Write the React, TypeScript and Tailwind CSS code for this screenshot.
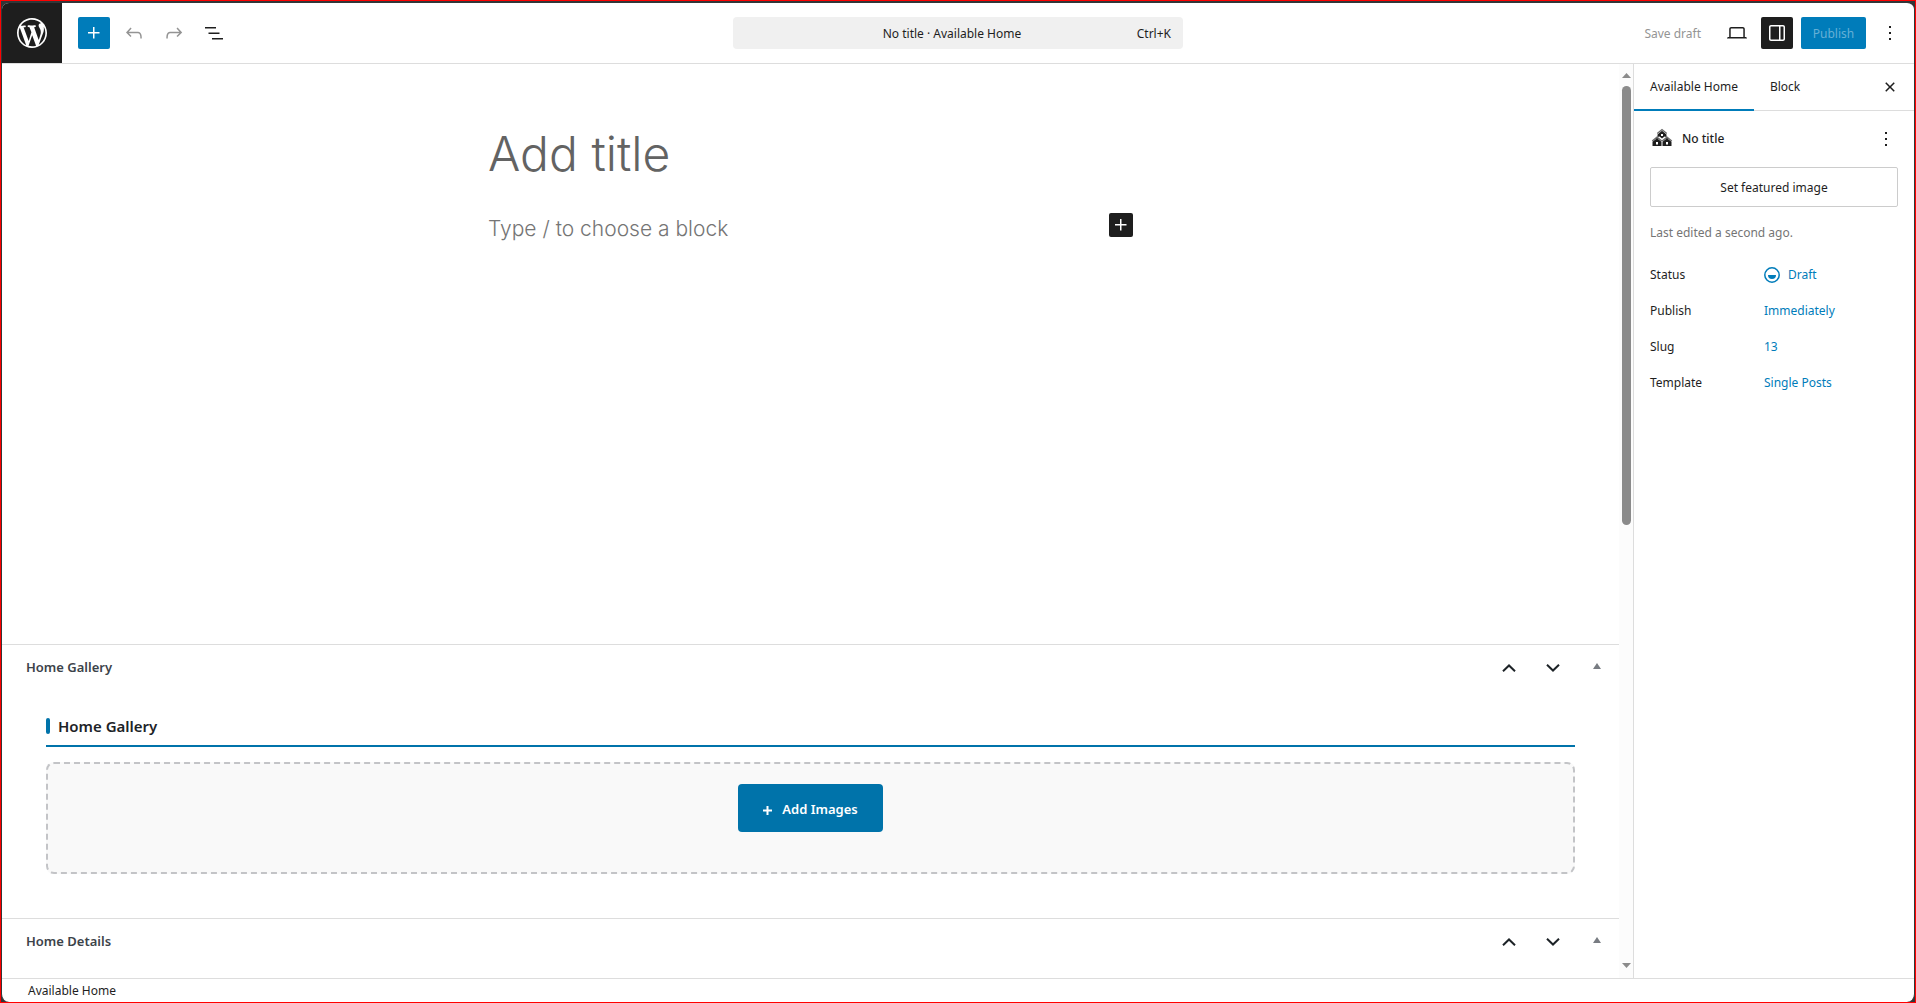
import { useState, type ReactNode } from "react";

const details = [
  { label: "Status", value: "Draft", icon: true },
  { label: "Publish", value: "Immediately" },
  { label: "Slug", value: "13" },
  { label: "Template", value: "Single Posts" },
];

function Icon({ children, className = "h-6 w-6" }: { children: ReactNode; className?: string }) {
  return (
    <svg viewBox="0 0 24 24" className={className} fill="currentColor" aria-hidden="true">
      {children}
    </svg>
  );
}

function IconButton({
  label,
  className = "",
  disabled,
  children,
}: {
  label: string;
  className?: string;
  disabled?: boolean;
  children: ReactNode;
}) {
  return (
    <button
      type="button"
      aria-label={label}
      disabled={disabled}
      className={`flex h-8 w-8 shrink-0 items-center justify-center rounded-xs ${className}`}
    >
      {children}
    </button>
  );
}

const plusPath = <path d="M11 12.5V17.5H12.5V12.5H17.5V11H12.5V6H11V11H6V12.5H11Z" />;
const morePath = <path d="M13 19h-2v-2h2v2zm0-6h-2v-2h2v2zm0-6h-2V5h2v2z" />;

function Toolbar() {
  return (
    <header className="grid h-[61px] shrink-0 grid-cols-[1fr_450px_1fr] items-center border-b border-[#ddd]">
      <div className="flex items-center gap-2 self-stretch">
        <a
          href="#dashboard"
          aria-label="View posts"
          className="mr-2 flex w-[60px] shrink-0 items-center justify-center self-stretch bg-[#1e1e1e] text-white"
        >
          <svg viewBox="-2 -2 24 24" className="h-9 w-9" fill="currentColor" aria-hidden="true">
            <path d="M20 10c0-5.51-4.49-10-10-10C4.48 0 0 4.49 0 10c0 5.52 4.48 10 10 10 5.51 0 10-4.48 10-10zM7.78 15.37L4.37 6.22c.55-.02 1.17-.08 1.17-.08.5-.06.44-1.13-.06-1.11 0 0-1.45.11-2.37.11-.18 0-.37 0-.58-.01C4.12 2.69 6.87 1.11 10 1.11c2.33 0 4.45.87 6.05 2.34-.68-.11-1.65.39-1.65 1.58 0 .74.45 1.36.9 2.1.35.61.55 1.36.55 2.46 0 1.49-1.4 5-1.4 5l-3.03-8.37c.54-.02.82-.17.82-.17.5-.05.44-1.25-.06-1.22 0 0-1.44.12-2.38.12-.87 0-2.33-.12-2.33-.12-.5-.03-.56 1.2-.06 1.22l.92.08 1.26 3.41zM17.41 10c.24-.64.74-1.87.43-4.25.7 1.29 1.05 2.71 1.05 4.25 0 3.29-1.73 6.24-4.4 7.78.97-2.59 1.94-5.2 2.92-7.78zM6.1 18.09C3.12 16.65 1.11 13.53 1.11 10c0-1.3.23-2.48.72-3.59C3.25 10.3 4.67 14.2 6.1 18.09zm4.03-6.63l2.58 6.98c-.86.29-1.76.45-2.71.45-.79 0-1.57-.11-2.29-.33.81-2.38 1.62-4.74 2.42-7.1z" />
          </svg>
        </a>
        <IconButton label="Block inserter" className="bg-[#007cba] text-white">
          <Icon>{plusPath}</Icon>
        </IconButton>
        <IconButton label="Undo" disabled className="text-[#949494]">
          <Icon>
            <path d="M18.3 11.7c-.6-.6-1.4-.9-2.3-.9H6.7l2.9-3.3-1.1-1-4.5 5L8.5 16l1-1-2.7-2.7H16c.5 0 .9.2 1.3.5 1 1 1 3.4 1 4.5v.3h1.5v-.2c0-1.5 0-4.3-1.5-5.7z" />
          </Icon>
        </IconButton>
        <IconButton label="Redo" disabled className="text-[#949494]">
          <Icon>
            <path d="M15.6 6.5l-1.1 1 2.9 3.3H8c-.9 0-1.7.3-2.3.9-1.4 1.5-1.4 4.2-1.4 5.6v.2h1.5v-.3c0-1.1 0-3.5 1-4.5.3-.3.7-.5 1.3-.5h9.2L14.5 15l1.1 1.1 4.6-4.6-4.6-5z" />
          </Icon>
        </IconButton>
        <IconButton label="Document overview" className="text-[#1e1e1e]">
          <Icon>
            <path d="M3 6h11v1.5H3V6Zm3.5 5.5h11V13h-11v-1.5ZM21 17H10v1.5h11V17Z" />
          </Icon>
        </IconButton>
      </div>

      <button
        type="button"
        className="grid h-8 grid-cols-[1fr_auto_1fr] items-center rounded bg-[#f0f0f0] pt-px pr-3 text-[#1e1e1e]"
      >
        <span />
        <span>No title · Available Home</span>
        <span className="text-right">Ctrl+K</span>
      </button>

      <div className="flex items-center justify-end gap-2 pr-2">
        <button type="button" disabled className="h-8 px-3 pt-px text-[#949494]">
          Save draft
        </button>
        <IconButton label="View" className="text-[#1e1e1e]">
          <Icon>
            <path d="M20.5 16h-.7V8c0-1.1-.9-2-2-2H6.2c-1.1 0-2 .9-2 2v8h-.7c-.8 0-1.5.7-1.5 1.5h20c0-.8-.7-1.5-1.5-1.5zM5.7 8c0-.3.2-.5.5-.5h11.6c.3 0 .5.2.5.5v8H5.7V8z" />
          </Icon>
        </IconButton>
        <IconButton label="Settings" className="bg-[#1e1e1e] text-white">
          <Icon>
            <path
              fillRule="evenodd"
              d="M18 4H6c-1.1 0-2 .9-2 2v12c0 1.1.9 2 2 2h12c1.1 0 2-.9 2-2V6c0-1.1-.9-2-2-2zm-4 14.5H6c-.3 0-.5-.2-.5-.5V6c0-.3.2-.5.5-.5h8v13zm4.5-.5c0 .3-.2.5-.5.5h-2.5v-13H18c.3 0 .5.2.5.5v12z"
            />
          </Icon>
        </IconButton>
        <button type="button" disabled className="h-8 w-[65px] rounded-xs bg-[#007cba] pt-px text-[#66b0d6]">
          Publish
        </button>
        <IconButton label="Options" className="text-[#1e1e1e]">
          <Icon>{morePath}</Icon>
        </IconButton>
      </div>
    </header>
  );
}

function Canvas() {
  return (
    <section
      aria-label="Editor content"
      className="min-h-0 flex-1 overflow-hidden font-['Inter','Liberation_Sans',sans-serif]"
    >
      <div className="mx-auto w-[645px] max-w-full pt-[60px]">
        <h1 className="text-[48px] leading-[60px] font-light text-[#636363]">Add title</h1>
        <div className="mt-6 flex items-start justify-between">
          <p className="pt-[3px] text-[21px] leading-9 font-light text-[#757575]">Type / to choose a block</p>
          <button
            type="button"
            aria-label="Add block"
            className="mt-[5px] flex h-6 w-6 items-center justify-center rounded-xs bg-[#1e1e1e] text-white"
          >
            <Icon>{plusPath}</Icon>
          </button>
        </div>
      </div>
    </section>
  );
}

function MetaBox({ title, children }: { title: string; children?: ReactNode }) {
  return (
    <section className="shrink-0 border-t border-[#ddd]">
      <div className="flex h-[46px] items-center justify-between pl-6">
        <h2 className="text-[13px] font-semibold text-[#3c434a]">{title}</h2>
        <div className="flex items-center text-[#1d2327]">
          <button type="button" aria-label="Move up" className="flex h-9 w-11 items-center justify-center pb-px">
            <svg viewBox="0 0 14 8" className="h-2 w-[14px]" fill="none" stroke="currentColor" strokeWidth="2">
              <path d="M1 7.3 7 1.5l6 5.8" />
            </svg>
          </button>
          <button type="button" aria-label="Move down" className="flex h-9 w-11 items-center justify-center pb-px">
            <svg viewBox="0 0 14 8" className="h-2 w-[14px]" fill="none" stroke="currentColor" strokeWidth="2">
              <path d="M1 .7 7 6.5l6-5.8" />
            </svg>
          </button>
          <button
            type="button"
            aria-label="Toggle panel"
            className="flex h-9 w-11 items-center justify-center pb-1 text-[#787c82]"
          >
            <svg viewBox="0 0 8 6" className="h-[6px] w-2" fill="currentColor">
              <path d="M4 0 8 6H0z" />
            </svg>
          </button>
        </div>
      </div>
      {children}
    </section>
  );
}

function Gallery() {
  return (
    <div className="px-11 pt-5 pb-11">
      <h3 className="flex h-9 items-start gap-2 border-b-2 border-[#0073aa] text-[15px] leading-[30px] font-semibold text-[#1d2327]">
        <span className="mt-[7px] h-4 w-1 rounded-xs bg-[#0073aa]" />
        Home Gallery
      </h3>
      <div className="mt-[15px] flex h-28 justify-center rounded-lg border-2 border-dashed border-[#c3c4c7] bg-[#f9f9f9] pt-5">
        <button
          type="button"
          className="flex h-12 w-[145px] items-center justify-center gap-[10px] rounded bg-[#0073aa] pt-1 text-[13px] font-semibold text-white"
        >
          <svg viewBox="0 0 9 9" className="h-[9px] w-[9px]" stroke="currentColor" strokeWidth="2">
            <path d="M4.5 0v9M0 4.5h9" />
          </svg>
          Add Images
        </button>
      </div>
    </div>
  );
}

function ScrollRail() {
  return (
    <div
      aria-hidden="true"
      className="flex w-[14px] shrink-0 flex-col items-center justify-between bg-[#fcfcfc] pt-[9px] pb-[10px] text-[#8b8b8b]"
    >
      <svg viewBox="0 0 9 5" className="h-[5px] w-[9px]" fill="currentColor">
        <path d="M4.5 0 9 5H0z" />
      </svg>
      <div className="flex w-[9px] flex-1 flex-col pt-2">
        <div className="h-1/2 rounded-full bg-[#8b8b8b]" />
      </div>
      <svg viewBox="0 0 9 5" className="h-[5px] w-[9px]" fill="currentColor">
        <path d="M0 0h9L4.5 5z" />
      </svg>
    </div>
  );
}

// Three stacked houses, the post type's menu icon
function HomesIcon() {
  return (
    <svg viewBox="0 0 24 24" className="h-6 w-6" aria-hidden="true">
      <g fill="none" stroke="#6b6b6b" strokeWidth="1.3">
        <path d="M7.2 6.5 12 2.6l4.8 3.9" />
        <path d="M2.2 14 7 10.2l4.8 3.8M12.2 14l4.8-3.8 4.8 3.8" />
      </g>
      <g fill="#1e1e1e" fillRule="evenodd">
        <path d="M12 3.8 16.500 7.400V10l-2-.6-2.500 2-2.500-2-2 .6V7.400zM11 7v2h2V7z" />
        <path d="M7 11.200l4.500 3.500V19h-9v-4.300zM6 15v2.500h2V15z" />
        <path d="M17 11.200l4.500 3.500V19h-9v-4.300zM16 15v2.500h2V15z" />
      </g>
    </svg>
  );
}

function Sidebar() {
  const [tab, setTab] = useState("Available Home");

  return (
    <aside className="flex w-[281px] shrink-0 flex-col border-l border-[#ddd] text-[#1e1e1e]">
      <div className="flex h-[47px] shrink-0 items-stretch border-b border-[#ddd]">
        <div role="tablist" className="-mb-px flex flex-1">
          {["Available Home", "Block"].map((name) => (
            <button
              key={name}
              type="button"
              role="tab"
              aria-selected={tab === name}
              onClick={() => setTab(name)}
              className={`border-b-2 px-4 pt-px ${tab === name ? "border-[#007cba]" : "border-transparent"}`}
            >
              {name}
            </button>
          ))}
        </div>
        <div className="flex items-center pr-2">
          <IconButton label="Close settings">
            <Icon>
              <path d="M12 13.06l3.712 3.713 1.061-1.06L13.061 12l3.712-3.712-1.06-1.06L12 10.938 8.288 7.227l-1.061 1.06L10.939 12l-3.712 3.712 1.06 1.061L12 13.061z" />
            </Icon>
          </IconButton>
        </div>
      </div>

      <div className="p-4 pt-3">
        <div className="flex h-8 items-center gap-2">
          <HomesIcon />
          <h2 className="flex-1 font-medium">No title</h2>
          <button type="button" aria-label="Actions" className="flex h-6 w-6 items-center justify-center">
            <Icon>{morePath}</Icon>
          </button>
        </div>
        <button type="button" className="mt-3 h-10 w-full rounded-xs border border-[#ccc] pt-px">
          Set featured image
        </button>
        <p className="mt-4 leading-5 text-[#757575]">Last edited a second ago.</p>
        <dl className="mt-4 flex flex-col gap-1">
          {details.map((item) => (
            <div key={item.label} className="flex h-8 items-center">
              <dt className="w-[114px] pb-px">{item.label}</dt>
              <dd>
                <button type="button" className="flex items-center gap-2 text-[#007cba]">
                  {item.icon ? (
                    <svg viewBox="0 0 16 16" className="h-4 w-4" aria-hidden="true">
                      <circle cx="8" cy="8" r="7.2" fill="none" stroke="currentColor" strokeWidth="1.5" />
                      <path d="M4 8h8a4 4 0 0 1-8 0z" fill="currentColor" />
                    </svg>
                  ) : null}
                  {item.value}
                </button>
              </dd>
            </div>
          ))}
        </dl>
      </div>
    </aside>
  );
}

export default function App() {
  return (
    <div className="h-screen border border-[#ff0000] bg-[#333638] font-['Noto_Sans','Open_Sans',sans-serif] text-[12px]">
      <div className="flex h-full flex-col overflow-hidden rounded-lg border-t-2 border-r border-l border-[#333638] bg-white">
        <Toolbar />
        <div className="flex min-h-0 flex-1">
          <main className="flex min-w-0 flex-1 flex-col">
            <Canvas />
            <MetaBox title="Home Gallery">
              <Gallery />
            </MetaBox>
            <MetaBox title="Home Details">
              <div className="h-[13px]" />
            </MetaBox>
          </main>
          <ScrollRail />
          <Sidebar />
        </div>
        <footer className="flex h-6 shrink-0 items-center border-t border-[#ddd] pt-px pl-[26px] text-[#1e1e1e]">
          Available Home
        </footer>
      </div>
    </div>
  );
}
